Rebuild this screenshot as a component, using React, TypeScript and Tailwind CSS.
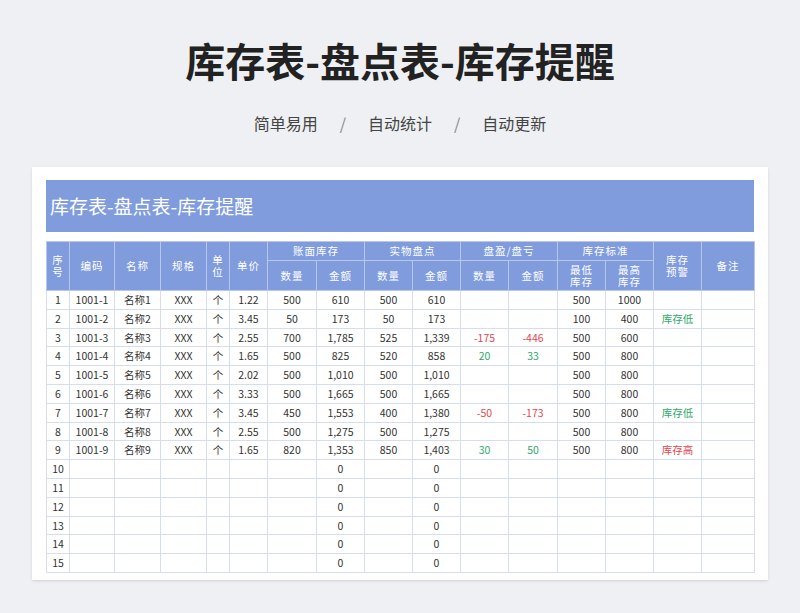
const widths = [23, 45, 46, 46, 23, 38, 49, 48, 48, 48, 48, 49, 48, 48, 48, 53];

type Row = (string | { t: string; c: string })[];
const R = (t: string) => ({ t, c: "text-[#e0484f]" });
const G = (t: string) => ({ t, c: "text-[#2fa86a]" });

const data: Row[] = [
  ["1", "1001-1", "名称1", "XXX", "个", "1.22", "500", "610", "500", "610", "", "", "500", "1000", "", ""],
  ["2", "1001-2", "名称2", "XXX", "个", "3.45", "50", "173", "50", "173", "", "", "100", "400", G("库存低"), ""],
  ["3", "1001-3", "名称3", "XXX", "个", "2.55", "700", "1,785", "525", "1,339", R("-175"), R("-446"), "500", "600", "", ""],
  ["4", "1001-4", "名称4", "XXX", "个", "1.65", "500", "825", "520", "858", G("20"), G("33"), "500", "800", "", ""],
  ["5", "1001-5", "名称5", "XXX", "个", "2.02", "500", "1,010", "500", "1,010", "", "", "500", "800", "", ""],
  ["6", "1001-6", "名称6", "XXX", "个", "3.33", "500", "1,665", "500", "1,665", "", "", "500", "800", "", ""],
  ["7", "1001-7", "名称7", "XXX", "个", "3.45", "450", "1,553", "400", "1,380", R("-50"), R("-173"), "500", "800", G("库存低"), ""],
  ["8", "1001-8", "名称8", "XXX", "个", "2.55", "500", "1,275", "500", "1,275", "", "", "500", "800", "", ""],
  ["9", "1001-9", "名称9", "XXX", "个", "1.65", "820", "1,353", "850", "1,403", G("30"), G("50"), "500", "800", R("库存高"), ""],
];
for (let i = 10; i <= 15; i++) {
  data.push([String(i), "", "", "", "", "", "", "0", "", "0", "", "", "", "", "", ""]);
}

const th = "border border-[#b9c7ee] font-normal text-[10.5px] leading-[12px] text-white tracking-[1px]";
const td = "border border-[#d6ddf0] h-[18.8px] p-0 text-center text-[10.5px]";

export default function App() {
  return (
    <div
      className="w-[800px] h-[613px] bg-[#eef0f3] flex flex-col items-center overflow-hidden"
      style={{ fontFamily: '"Noto Sans CJK SC", "Noto Sans", sans-serif' }}
    >
      <h1 className="mt-[34px] text-[40px] leading-[52px] font-bold text-[#222]">库存表-盘点表-库存提醒</h1>
      <div className="mt-[26px] flex gap-[22px] text-[16px] text-[#444] leading-[22px]">
        <span>简单易用</span><span className="text-[#888]">/</span>
        <span>自动统计</span><span className="text-[#888]">/</span>
        <span>自动更新</span>
      </div>
      <div className="mt-[33px] w-[736px] h-[413px] bg-white px-[14px] pt-[13px] overflow-hidden shadow-sm">
        <div className="h-[52px] bg-[#809cdd] flex items-center pl-[4px] text-[19px] text-white">库存表-盘点表-库存提醒</div>
        <table className="mt-[9px] border-collapse table-fixed w-[708px]">
          <colgroup>
            {widths.map((w, i) => <col key={i} style={{ width: w }} />)}
          </colgroup>
          <thead className="bg-[#809cdd]">
            <tr className="h-[19px]">
              <th rowSpan={2} className={th}>序<br />号</th>
              <th rowSpan={2} className={th}>编码</th>
              <th rowSpan={2} className={th}>名称</th>
              <th rowSpan={2} className={th}>规格</th>
              <th rowSpan={2} className={th}>单<br />位</th>
              <th rowSpan={2} className={th}>单价</th>
              <th colSpan={2} className={th}>账面库存</th>
              <th colSpan={2} className={th}>实物盘点</th>
              <th colSpan={2} className={th}>盘盈/盘亏</th>
              <th colSpan={2} className={th}>库存标准</th>
              <th rowSpan={2} className={th}>库存<br />预警</th>
              <th rowSpan={2} className={th}>备注</th>
            </tr>
            <tr className="h-[30px]">
              <th className={th}>数量</th><th className={th}>金额</th>
              <th className={th}>数量</th><th className={th}>金额</th>
              <th className={th}>数量</th><th className={th}>金额</th>
              <th className={th}>最低<br />库存</th><th className={th}>最高<br />库存</th>
            </tr>
          </thead>
          <tbody>
            {data.map((r, i) => (
              <tr key={i}>
                {r.map((c, j) =>
                  typeof c === "string" ? (
                    <td key={j} className={`${td} text-[#333]`}>{c}</td>
                  ) : (
                    <td key={j} className={`${td} ${c.c}`}>{c.t}</td>
                  )
                )}
              </tr>
            ))}
          </tbody>
        </table>
      </div>
    </div>
  );
}
